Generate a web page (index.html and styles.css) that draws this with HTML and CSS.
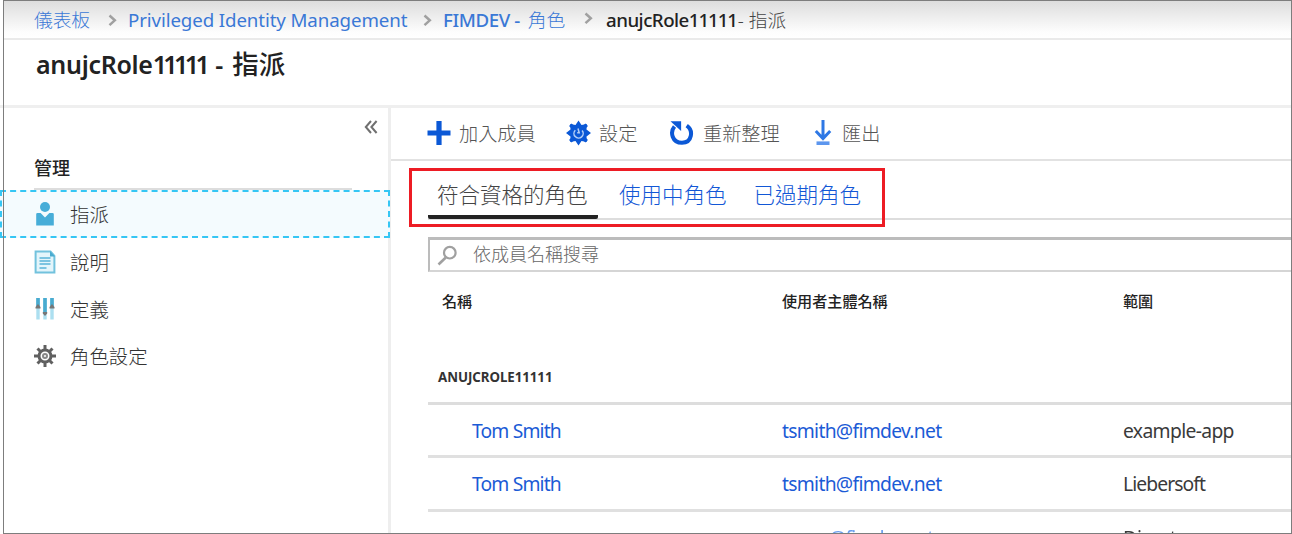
FILE: index.html
```html
<!DOCTYPE html>
<html lang="zh-Hant">
<head>
<meta charset="utf-8">
<title>anujcRole11111 - 指派</title>
<link rel="stylesheet" href="styles.css">
</head>
<body>
<div class="window">
  <nav class="breadcrumb">
    <a class="crumb crumb-home">儀表板</a>
    <svg class="chevron" width="9" height="13" viewBox="0 0 9 13"><path d="M1.5 1.5 6.8 6.3 1.5 11.2"/></svg>
    <a class="crumb crumb-pim">Privileged Identity Management</a>
    <svg class="chevron" width="9" height="13" viewBox="0 0 9 13"><path d="M1.5 1.5 6.8 6.3 1.5 11.2"/></svg>
    <a class="crumb crumb-dir"><b>FIMDEV -</b> 角色</a>
    <svg class="chevron chevron-high" width="9" height="13" viewBox="0 0 9 13"><path d="M1.5 1.5 6.8 6.3 1.5 11.2"/></svg>
    <span class="crumb crumb-current"><b>anujcRole<span class="crumb-digits">11111</span></b>- 指派</span>
  </nav>
  <header class="title"><h1><span class="title-name">anujcRole<span class="title-digits">11111</span></span><span class="title-dash">-</span>指派</h1></header>
  <div class="body">
    <aside class="sidebar">
      <div class="collapse"><svg width="14" height="14" viewBox="0 0 14 14"><path d="M7 1 1.8 7 7 13M12.6 1 7.4 7l5.2 6"/></svg></div>
      <div class="group">管理</div>
      <ul class="menu">
        <li class="item item-selected">
          <svg width="22" height="26" viewBox="0 0 22 26" fill="#47add8"><circle cx="11" cy="6" r="5"/><path d="M2.2 13.3q0-1.3 1.3-1.3h3.1L11 16.5l4.4-4.5h3.1q1.3 0 1.3 1.3V24.500H2.200z"/></svg>
          <span>指派</span></li>
        <li class="item">
          <svg width="22" height="24" viewBox="0 0 22 24"><path d="M1.600 1.600H16.500L20.400 6V22.400H1.600z" fill="#e3f5fb" stroke="#72c2dd" stroke-width="2"/><path d="M16 1v5.500h5z" fill="#4aabd0"/><path d="M5.500 8h11M5.500 11h11M5.500 14h11M5.500 18h7" stroke="#59b4d9" stroke-width="1.600"/></svg>
          <span>說明</span></li>
        <li class="item">
          <svg width="22" height="24" viewBox="0 0 22 24"><path d="M4 1v21.500M11 1v21.500M18 1v21.500" stroke="#acdff0" stroke-width="3.400"/><path d="M4 1v8M11 1v15M18 1v8" stroke="#49abd0" stroke-width="3.600"/><path d="M1.500 10 4 7l2.500 3v1.500h-5zM15.500 10 18 7l2.500 3v1.500h-5zM8.800 15h4.400v1.500L11 19l-2.200-2.500z" fill="#777"/></svg>
          <span>定義</span></li>
        <li class="item">
          <svg width="22" height="24" viewBox="0 0 22 24"><g stroke="#606060" fill="none"><path stroke-width="3" d="M11 1v4.500M11 18.500V23M0 12h4.500M17.500 12H22M3.500 4.500l3 3M15.500 16.500l3 3M18.500 4.500l-3 3M6.500 16.500l-3 3"/><circle cx="11" cy="12" r="6" stroke-width="3"/><circle cx="11" cy="12" r="2" stroke-width="2" stroke="#888"/></g></svg>
          <span>角色設定</span></li>
      </ul>
    </aside>
    <main class="content">
      <div class="toolbar">
        <div class="tool tool-add"><svg width="24" height="26" viewBox="0 0 24 26"><path d="M12 1v24M.5 13h23" stroke="#0b58d6" stroke-width="5.200"/></svg>加入成員</div>
        <div class="tool tool-settings"><svg width="25" height="26" viewBox="0 0 25 26"><path fill="#0b58d6" d="M12.500.5 15.500 5 20.800 4 20.500 9.500 25 13 20.500 16.500 20.800 22 15.500 21 12.500 25.500 9.500 21 4.200 22 4.500 16.500 0 13 4.500 9.500 4.200 4 9.500 5z"/><path stroke="#0b58d6" stroke-width="3.600" d="M4.300 4.800l4 4M16.700 17.200l4 4M20.700 4.800l-4 4M8.300 17.200l-4 4"/><path fill="none" stroke="#b5cff7" stroke-width="1.500" d="M9.300 10.200a4.600 4.600 0 1 0 6.800.3M12 8.500l1.200 4.300h-2"/></svg>設定</div>
        <div class="tool tool-refresh"><svg width="25" height="26" viewBox="0 0 25 26"><path d="M5.500 6.500C.8 12 3 22.800 13 22.800S24.800 10.500 17.700 5.600" fill="none" stroke="#0b58d6" stroke-width="4"/><path d="M1.500 1.200h10.600V11z" fill="#0b58d6"/></svg>重新整理</div>
        <div class="tool tool-export"><svg width="18" height="27" viewBox="0 0 18 27"><path d="M9 1v18M1.800 12 9 19.500l7.200-7.500" fill="none" stroke="#2e78e5" stroke-width="3"/><path d="M2.500 24.200h13" stroke="#5c96ee" stroke-width="3.600"/></svg>匯出</div>
      </div>
      <div class="tabs-area">
        <div class="tabs">
          <a class="tab tab-active">符合資格的角色</a>
          <a class="tab tab-link">使用中角色</a>
          <a class="tab tab-link">已過期角色</a>
        </div>
        <div class="highlight"></div>
      </div>
      <div class="search">
        <svg width="22" height="22" viewBox="0 0 22 22"><g fill="none" stroke="#a0a0a0"><circle cx="12.800" cy="8.700" r="5.800" stroke-width="2.200"/><path d="M8.800 13.500 1.500 20.500" stroke-width="2.600"/></g></svg>
        <span>依成員名稱搜尋</span>
      </div>
      <div class="grid-head"><span>名稱</span><span>使用者主體名稱</span><span>範圍</span></div>
      <div class="grid-group">ANUJCROLE11111</div>
      <div class="row"><a class="name">Tom Smith</a><a class="upn">tsmith@fimdev.net</a><span class="scope-app">example-app</span></div>
      <div class="row row-tall"><a class="name">Tom Smith</a><a class="upn">tsmith@fimdev.net</a><span class="scope-lieb">Liebersoft</span></div>
      <div class="row row-cut"><a></a><a class="upn-cut">@fimdev.net</a><span>Directory</span></div>
    </main>
  </div>
</div>
</body>
</html>
```
FILE: styles.css
```css
* { box-sizing: border-box; }
body { margin: 0; background: #fff; font-family: "Noto Sans", "Noto Sans CJK TC", sans-serif; color: #3a3a3a; }
.window { position: relative; width: 1292px; height: 534px; overflow: hidden; display: flex; flex-direction: column; white-space: nowrap; }
.window::after { content: ""; position: absolute; inset: 0 0 0 3px; border: 1px solid #7d7d7d; pointer-events: none; }
.breadcrumb { height: 40px; flex: none; margin-left: 3px; padding-left: 31px; display: flex; align-items: flex-start; border-bottom: 2px solid #eaeaea; background: linear-gradient(#dcdcdc, #fdfdfd 32px, #fff); }
.crumb { line-height: 26px; padding-top: 7px; font-size: 18.700px; font-weight: 300; color: #3a78d6; flex: none; }
.crumb b { font-weight: 500; }
.crumb-home { width: 74px; }
.crumb-pim { width: 295px; margin-left: 11px; font-weight: 400; letter-spacing: -.1px; }
.crumb-dir { width: 141px; margin-left: 11px; }
.crumb-dir b { letter-spacing: -.4px; margin-right: 3px; }
.crumb-current { margin-left: 13px; color: #444; }
.crumb-current b { color: #222; letter-spacing: -.5px; margin-right: 1px; }
.crumb-current .crumb-digits { letter-spacing: -1.1px; }
.chevron { margin-top: 14px; flex: none; fill: none; stroke: #a0a0a0; stroke-width: 2.500; }
.chevron-high { margin-top: 12px; }
.title { height: 68px; flex: none; padding: 6px 0 0 36px; border-bottom: 3px solid #efefef; }
.title h1 { margin: 0; font-size: 26.500px; line-height: 36px; font-weight: 500; color: #222; }
.title-name { font-weight: 600; font-size: 25px; letter-spacing: -.3px; }
.title-digits { letter-spacing: -3.600px; }
.title-dash { margin: 0 9px 0 9px; font-size: 25px; font-weight: 600; }
.body { flex: 1; display: flex; min-height: 0; }
.sidebar { width: 391px; flex: none; border-right: 3px solid #eee; padding-top: 12px; }
.collapse { height: 14px; padding-left: 364px; display: flex; }
.collapse svg { fill: none; stroke: #707070; stroke-width: 2; }
.group { margin: 20px 0 0 34px; height: 36px; width: 318px; line-height: 28px; font-size: 18px; font-weight: 500; color: #222; border-bottom: 2px solid #ddd; }
.menu { list-style: none; margin: 0; padding: 0; }
.item { height: 47px; display: flex; align-items: center; gap: 14px; padding-left: 34px; font-size: 19.400px; font-weight: 300; color: #333; }
.item-selected span { padding-bottom: 1px; }
.item-selected { height: 48px; width: 390px; padding-left: 32px; background: #f4fbfe; border: 2px dashed #35c6f4; }
.content { flex: 1; min-width: 0; display: flex; flex-direction: column; }
.toolbar { height: 53px; flex: none; display: flex; align-items: center; padding: 0 0 2px 36px; border-bottom: 2px solid #e2e2e2; font-size: 19.200px; font-weight: 300; color: #555; }
.tool { display: flex; align-items: center; gap: 8px; flex: none; }
.tool-add { width: 139px; }
.tool-settings { width: 103px; }
.tool-refresh { width: 145px; gap: 9px; }
.tool-export { gap: 10px; }
.tabs-area { position: relative; height: 76px; flex: none; padding: 10px 0 0 37px; }
.highlight { position: absolute; left: 18px; top: 7px; width: 476px; height: 59px; border: 3px solid #ed1c24; }
.tabs { height: 49px; display: flex; border-bottom: 2px solid #ddd; font-size: 21.500px; font-weight: 300; line-height: 48px; }
.tab { margin-right: 27px; }
.tab-active { width: 170px; height: 48px; padding-left: 9px; margin-right: 21px; border-bottom: 4px solid #222; border-radius: 2px; color: #444; }
.tab-link { color: #1257d6; }
.search { height: 35px; flex: none; margin-left: 37px; padding-left: 7px; border: solid #bcbcbc; border-width: 3px 0 2px 2px; border-bottom-color: #d5d5d5; display: flex; align-items: center; gap: 14px; font-size: 18px; font-weight: 300; color: #666; }
.search span { padding-bottom: 4px; }
.grid-head { height: 58px; flex: none; display: grid; grid-template-columns: 340px 341px 1fr; padding-left: 51px; line-height: 58px; font-size: 15.100px; font-weight: 500; color: #222; }
.grid-group { height: 75px; flex: none; margin-left: 37px; padding: 37px 0 0 10px; border-bottom: 3px solid #ddd; font-size: 13.300px; font-weight: 700; line-height: 20px; color: #333; letter-spacing: -.05px; }
.row { height: 53px; flex: none; margin-left: 37px; padding-left: 44px; display: grid; grid-template-columns: 310px 341px 1fr; line-height: 52px; font-size: 19.300px; border-bottom: 3px solid #e0e0e0; }
.row-tall { height: 54px; }
.row a { color: #1b5bd6; }
.name { letter-spacing: -.85px; }
.upn { letter-spacing: -.7px; }
.scope-app { letter-spacing: -.65px; }
.scope-lieb { letter-spacing: -.9px; }
.row-cut { filter: blur(.7px); line-height: 52px; }
.row .upn-cut { padding-left: 47px; letter-spacing: -.8px; color: #6a9dee; }
```
